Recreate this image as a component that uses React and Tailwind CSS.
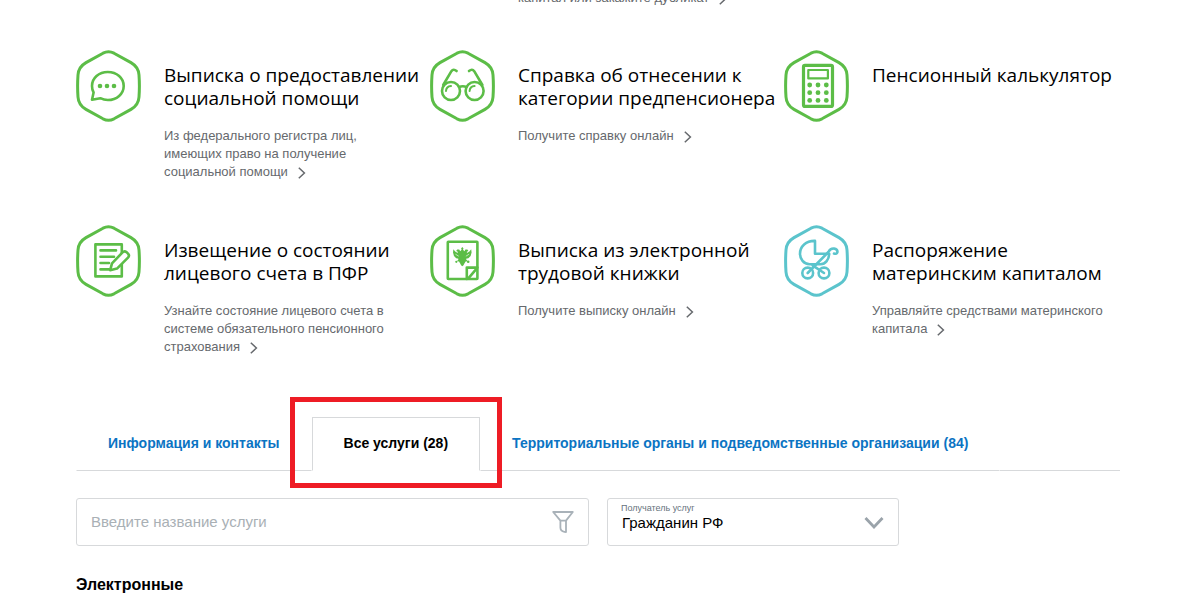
import { useState } from "react";

const SERVICES = [
  {
    title: "Выписка о предоставлении\nсоциальной помощи",
    text: "Из федерального регистра лиц,\nимеющих право на получение\nсоциальной помощи",
    icon: ChatIcon,
  },
  {
    title: "Справка об отнесении к\nкатегории предпенсионера",
    text: "Получите справку онлайн",
    icon: GlassesIcon,
  },
  {
    title: "Пенсионный калькулятор",
    icon: CalculatorIcon,
  },
  {
    title: "Извещение о состоянии\nлицевого счета в ПФР",
    text: "Узнайте состояние лицевого счета в\nсистеме обязательного пенсионного\nстрахования",
    icon: StatementIcon,
  },
  {
    title: "Выписка из электронной\nтрудовой книжки",
    text: "Получите выписку онлайн",
    icon: WorkbookIcon,
  },
  {
    title: "Распоряжение\nматеринским капиталом",
    text: "Управляйте средствами материнского\nкапитала",
    icon: StrollerIcon,
    teal: true,
  },
];

const TABS = [
  { id: "info", label: "Информация и контакты" },
  { id: "services", label: "Все услуги (28)" },
  { id: "offices", label: "Территориальные органы и подведомственные организации (84)" },
];

function ChatIcon() {
  return (
    <>
      <path d="M17.6 42.5C16.5 40.6 16 38.4 16 36C16 28.2 22.8 22 31.8 22S47.7 28.2 47.7 36S40.8 50 31.8 50C29 50 26.5 49.3 24.3 48.2L16 49.8Z" />
      <g fill="currentColor" stroke="none">
        <circle cx="24" cy="36" r="2.3" />
        <circle cx="31" cy="36" r="2.3" />
        <circle cx="38" cy="36" r="2.3" />
      </g>
    </>
  );
}

function GlassesIcon() {
  return (
    <>
      <circle cx="21" cy="41" r="9" />
      <circle cx="44.6" cy="41" r="9" />
      <path d="M29 37Q32.8 35.4 36.6 37" />
      <path d="M13.2 35L21.4 21.2Q23.4 18.4 26.6 21" />
      <path d="M52.4 35L44.2 21.2Q42.2 18.4 39 21" />
      <path d="M16 41Q16.2 36.4 21 36M39.6 41Q39.8 36.4 44.6 36" strokeWidth="2" />
    </>
  );
}

function CalculatorIcon() {
  const rows = [35, 42.7, 50.4];
  const cols = [25.7, 34, 42.3];
  return (
    <>
      <rect x="19.5" y="15.4" width="29" height="41" rx="1.5" strokeWidth="3.2" />
      <rect x="24.3" y="20" width="19.6" height="8.4" strokeWidth="2.2" />
      <g fill="currentColor" stroke="none">
        {rows.map((y) => cols.map((x) => <circle key={`${x}-${y}`} cx={x} cy={y} r="2.4" />))}
      </g>
    </>
  );
}

function StatementIcon() {
  return (
    <>
      <rect x="19.4" y="19.4" width="26.4" height="32" />
      <path d="M24.5 25.4H40M24.5 31.7H38M24.5 38H33M24.5 44.4H33" />
      <path
        d="M34.2 45.2L36 38.4L46.5 27.4Q48.4 25.4 50.6 27.2L52.2 28.8Q53.8 30.6 52 32.6L41 43.6Z"
        fill="white"
      />
    </>
  );
}

function WorkbookIcon() {
  return (
    <>
      <rect x="17.8" y="16.8" width="29.6" height="37.2" rx="0.5" />
      <path d="M47.4 42.6H36.8V54M39.2 52.4L46 44.4" />
      <g fill="currentColor" stroke="none">
        <path d="M32.3 22l1.2 1.4-.5 1.4 1.4 1.4 1-1.8 2 .2 1 1.4-1.6.8.2 1.2 2.4-1.6 1.8-2.2.4 3.4-1 3.4-2.2 2.2-2.6.6 1.8 2.4-2 .4-1.2 2-.9 1.6-1.2 1-1.2-1-.9-1.6-1.2-2-2-.4 1.8-2.4-2.6-.6-2.2-2.2-1-3.4.4-3.4 1.8 2.2 2.4 1.6.2-1.2-1.6-.8 1-1.4 2-.2 1 1.8 1.4-1.4-.5-1.4z" />
        <circle cx="32.3" cy="31.5" r="4.4" />
        <circle cx="26.3" cy="36.8" r="1.1" />
        <circle cx="38.2" cy="36.8" r="1.3" />
      </g>
      <path d="M25.8 29.4L28.4 31M38.8 29.4L36.2 31" stroke="white" strokeWidth="0.6" />
    </>
  );
}

function StrollerIcon() {
  return (
    <>
      <path d="M31 28.7V15.9C22 15.6 16 21.6 16 28.7C16 34 19.6 39.2 25.6 39.2H36.4C41.6 39.2 45 34.6 45.2 28.7Z" />
      <path d="M23.7 48L44.4 27Q46.4 23.2 50 23.6Q53.8 24.4 53.4 27.2Q52.8 29.4 50 28.6" />
      <path d="M28.6 40.4L40 48" />
      <circle cx="23.7" cy="48" r="5.4" />
      <circle cx="40" cy="48" r="5.4" />
    </>
  );
}

function Hexagon({ teal, children }) {
  return (
    <svg
      viewBox="0 0 65 72"
      className={`h-[72px] w-[65px] shrink-0 ${teal ? "text-[#5bc4cc]" : "text-[#5cbd47]"}`}
      fill="none"
      stroke="currentColor"
      strokeWidth="2.6"
      strokeLinecap="round"
      strokeLinejoin="round"
      aria-hidden="true"
    >
      <path
        d="M27 3.2Q32.5 .4 38 3.2L55 12.6Q62.6 17 63 25Q63.8 36 63 47Q62.6 55 55 59.4L38 68.8Q32.5 71.6 27 68.8L10 59.4Q2.4 55 2 47Q1.2 36 2 25Q2.4 17 10 12.6Z"
        strokeWidth="3"
      />
      {children}
    </svg>
  );
}

function Arrow() {
  return (
    <svg
      viewBox="0 0 8 12"
      className="ml-2.5 inline-block h-3 w-2 align-[-3px]"
      fill="none"
      stroke="currentColor"
      strokeWidth="1.5"
      aria-hidden="true"
    >
      <path d="M.8 .8L6.4 6L.8 11.2" />
    </svg>
  );
}

function ServiceCard({ service }) {
  const Icon = service.icon;
  return (
    <a href="#" className="flex gap-[23px]">
      <Hexagon teal={service.teal}>
        <Icon />
      </Hexagon>
      <div className="pt-3.5">
        <h3 className="font-['Open_Sans','Noto_Sans',sans-serif] text-[19px] leading-[23px] whitespace-pre text-black">
          {service.title}
        </h3>
        {service.text && (
          <p className="mt-[17px] text-[13px] leading-[18px] whitespace-pre text-[#66696d]">
            {service.text}
            <Arrow />
          </p>
        )}
      </div>
    </a>
  );
}

export default function App() {
  const [tab, setTab] = useState("services");
  const [query, setQuery] = useState("");

  return (
    <main className="overflow-hidden bg-white pr-20 pb-2 pl-[76px] font-['Liberation_Sans',Arial,sans-serif] text-black">
      <div className="-mt-[11px] grid grid-cols-3 gap-x-[18px]">
        <a href="#" className="col-start-2 pl-[88px] text-[13px] leading-[18px] whitespace-pre text-[#66696d]">
          капитал или закажите дубликат
          <Arrow />
        </a>
      </div>

      <section className="mt-[43px] grid grid-cols-3 gap-x-[18px] gap-y-11">
        {SERVICES.map((service) => (
          <ServiceCard key={service.title} service={service} />
        ))}
      </section>

      <div role="tablist" className="mt-[61px] flex h-[54px] text-sm font-bold">
        {TABS.map(({ id, label }) => (
          <button
            key={id}
            role="tab"
            aria-selected={tab === id}
            onClick={() => setTab(id)}
            className={`relative shrink-0 border px-[31px] pb-0.5 ${
              tab === id
                ? "border-[#d7d9db] border-b-transparent text-black"
                : "border-transparent border-b-[#d7d9db] text-[#0b74c3]"
            }`}
          >
            {label}
            {id === "services" && (
              <span className="pointer-events-none absolute -inset-x-[23px] -top-[21px] -bottom-[18px] z-10 border-[5px] border-[#ee1c25]" />
            )}
          </button>
        ))}
        <div className="flex-1 border-b border-[#d7d9db]" />
      </div>

      <div className="mt-[27px] grid grid-cols-[513fr_292fr_203fr] gap-[18px]">
        <div className="flex h-12 items-center rounded-[3px] border border-[#d7d9db] pr-3.5 pl-3.5">
          <input
            type="text"
            aria-label="Введите название услуги"
            placeholder="Введите название услуги"
            value={query}
            onChange={(e) => setQuery(e.target.value)}
            className="min-w-0 flex-1 text-[15px] placeholder-[#a9b0b5] outline-none"
          />
          <button aria-label="Фильтр" className="text-[#a9b2b9]">
            <svg
              viewBox="0 0 22 24"
              className="h-6 w-[22px]"
              fill="none"
              stroke="currentColor"
              strokeWidth="1.8"
              strokeLinejoin="round"
            >
              <path d="M1.2 2H20.8L14 10.6V22L12.4 21.8Q8.4 21.2 8.4 17.6V10.6ZM8.4 10.6H14" />
            </svg>
          </button>
        </div>

        <div className="relative h-12 rounded-[3px] border border-[#d7d9db]">
          <label
            htmlFor="recipient"
            className="pointer-events-none absolute top-[3px] left-[13px] text-[9px] leading-3 text-[#66727c]"
          >
            Получатель услуг
          </label>
          <select
            id="recipient"
            className="h-full w-full appearance-none bg-transparent pt-0.5 pr-12 pl-3.5 text-[15px] outline-none"
          >
            <option>Гражданин РФ</option>
          </select>
          <svg
            viewBox="0 0 20 12"
            className="pointer-events-none absolute top-[18px] right-3.5 h-3 w-5 text-[#9aa3aa]"
            fill="none"
            stroke="currentColor"
            strokeWidth="2.8"
            aria-hidden="true"
          >
            <path d="M1.5 1L10 10L18.5 1" />
          </svg>
        </div>
      </div>

      <h2 className="mt-[27px] text-base leading-6 font-bold">Электронные</h2>
    </main>
  );
}
